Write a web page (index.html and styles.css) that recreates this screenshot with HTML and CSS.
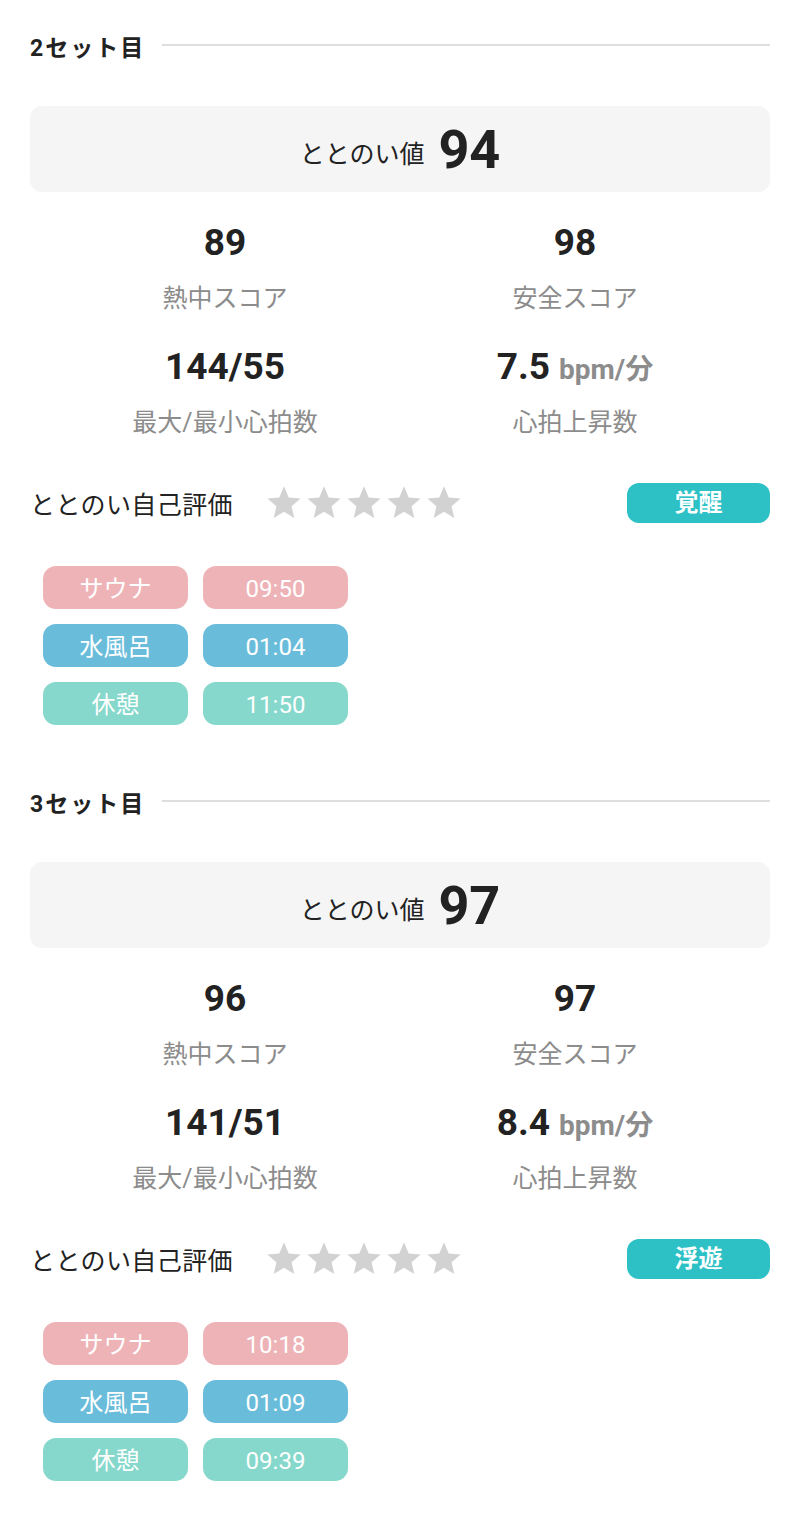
FILE: index.html
```html
<!DOCTYPE html>
<html>
<head>
    <meta name="viewport" content="width=device-width, initial-scale=1">
    <link rel="stylesheet" href="styles.css">
</head>

<body>

<svg width="0" height="0" style="position:absolute">
    <symbol id="star" viewBox="0 0 24 24">
        <path d="M12 17.27L18.18 21l-1.64-7.03L22 9.24l-7.19-.61L12 2 9.19 8.63 2 9.24l5.46 4.73L5.82 21z"/>
    </symbol>
</svg>

<div class="set">
    <div class="set-head">
        <span class="set-title">2セット目</span>
        <span class="set-line"></span>
    </div>

    <div class="score-box">
        <span class="score-label">ととのい値</span>
        <span class="score-value">94</span>
    </div>

    <div class="stats">
        <div class="stat">
            <div class="stat-num">89</div>
            <div class="stat-label">熱中スコア</div>
        </div>
        <div class="stat">
            <div class="stat-num">98</div>
            <div class="stat-label">安全スコア</div>
        </div>
        <div class="stat">
            <div class="stat-num">144/55</div>
            <div class="stat-label">最大/最小心拍数</div>
        </div>
        <div class="stat">
            <div class="stat-num">7.5 <span class="unit">bpm/分</span></div>
            <div class="stat-label">心拍上昇数</div>
        </div>
    </div>

    <div class="rating">
        <span class="rating-label">ととのい自己評価</span>
        <span class="stars">
            <svg><use href="#star"/></svg>
            <svg><use href="#star"/></svg>
            <svg><use href="#star"/></svg>
            <svg><use href="#star"/></svg>
            <svg><use href="#star"/></svg>
        </span>
        <span class="mood">覚醒</span>
    </div>

    <div class="tags">
        <span class="tag sauna">サウナ</span>
        <span class="tag sauna">09:50</span>
        <span class="tag water">水風呂</span>
        <span class="tag water">01:04</span>
        <span class="tag rest">休憩</span>
        <span class="tag rest">11:50</span>
    </div>
</div>

<div class="set">
    <div class="set-head">
        <span class="set-title">3セット目</span>
        <span class="set-line"></span>
    </div>

    <div class="score-box">
        <span class="score-label">ととのい値</span>
        <span class="score-value">97</span>
    </div>

    <div class="stats">
        <div class="stat">
            <div class="stat-num">96</div>
            <div class="stat-label">熱中スコア</div>
        </div>
        <div class="stat">
            <div class="stat-num">97</div>
            <div class="stat-label">安全スコア</div>
        </div>
        <div class="stat">
            <div class="stat-num">141/51</div>
            <div class="stat-label">最大/最小心拍数</div>
        </div>
        <div class="stat">
            <div class="stat-num">8.4 <span class="unit">bpm/分</span></div>
            <div class="stat-label">心拍上昇数</div>
        </div>
    </div>

    <div class="rating">
        <span class="rating-label">ととのい自己評価</span>
        <span class="stars">
            <svg><use href="#star"/></svg>
            <svg><use href="#star"/></svg>
            <svg><use href="#star"/></svg>
            <svg><use href="#star"/></svg>
            <svg><use href="#star"/></svg>
        </span>
        <span class="mood">浮遊</span>
    </div>

    <div class="tags">
        <span class="tag sauna">サウナ</span>
        <span class="tag sauna">10:18</span>
        <span class="tag water">水風呂</span>
        <span class="tag water">01:09</span>
        <span class="tag rest">休憩</span>
        <span class="tag rest">09:39</span>
    </div>
</div>

</body>
</html>
```

FILE: styles.css
```css
body {
    margin: 0;
    padding: 0 30px;
    font-family: Roboto, "Noto Sans CJK JP", sans-serif;
    color: #222;
    background: #fff;
}

.set {
    padding: 30px 0 31px 0;
}

.set-head {
    display: flex;
    align-items: center;
    gap: 17px;
    height: 32px;
}

.set-title {
    font-size: 23px;
    font-weight: bold;
    letter-spacing: 2px;
    white-space: nowrap;
}

.set-line {
    flex: 1;
    height: 2px;
    margin-top: -3px;
    background-color: #dedede;
}

.score-box {
    margin-top: 44px;
    height: 86px;
    border-radius: 12px;
    background-color: #f5f5f5;
    display: flex;
    align-items: center;
    justify-content: center;
    gap: 14px;
}

.score-label {
    font-size: 25px;
    padding-top: 6px;
}

.score-value {
    font-size: 54px;
    font-weight: bold;
}

.stats {
    margin: 29px 20px 0 20px;
    display: grid;
    grid-template-columns: 1fr 1fr;
    row-gap: 24px;
    text-align: center;
}

.stat-num {
    height: 44px;
    font-size: 37px;
    font-weight: bold;
    line-height: 44px;
}

.unit {
    font-size: 28px;
    line-height: 1;
    color: #8c8c8c;
}

.stat-label {
    margin-top: 12px;
    font-size: 25px;
    line-height: 44px;
    color: #8c8c8c;
}

.rating {
    margin-top: 38px;
    height: 40px;
    display: flex;
    align-items: center;
}

.rating-label {
    font-size: 25px;
    letter-spacing: 0.4px;
}

.stars {
    display: flex;
    margin-left: 31px;
}

.stars svg {
    width: 40px;
    height: 40px;
    fill: #d2d2d2;
}

.mood {
    margin-left: auto;
    width: 143px;
    height: 40px;
    line-height: 40px;
    border-radius: 12px;
    background-color: #2dc1c6;
    color: white;
    font-size: 24px;
    font-weight: bold;
    text-align: center;
}

.tags {
    margin: 43px 0 0 13px;
    display: grid;
    grid-template-columns: 145px 145px;
    gap: 15px;
}

.tag {
    height: 43px;
    padding-top: 3px;
    box-sizing: border-box;
    line-height: 40px;
    border-radius: 13px;
    color: white;
    font-size: 24px;
    text-align: center;
}

.sauna { background-color: #eeb3b7; }
.water { background-color: #69bcda; }
.rest { background-color: #85d8cb; }
```
